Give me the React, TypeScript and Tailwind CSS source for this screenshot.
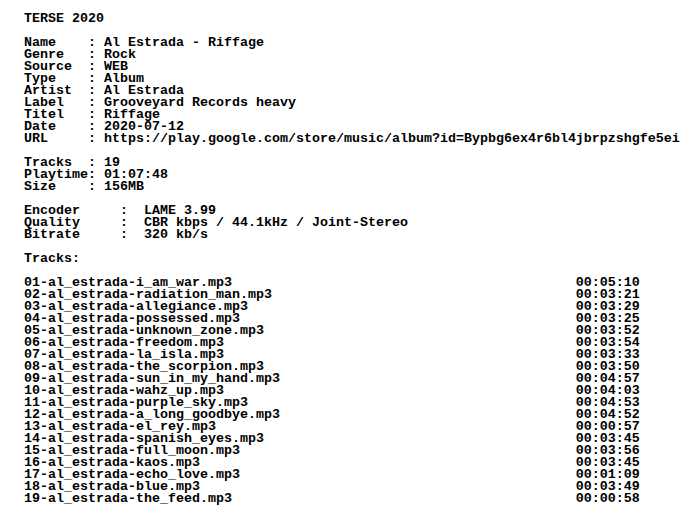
import React from "react";

const header = `TERSE 2020

Name    : Al Estrada - Riffage
Genre   : Rock
Source  : WEB
Type    : Album
Artist  : Al Estrada
Label   : Grooveyard Records heavy
Titel   : Riffage
Date    : 2020-07-12
URL     : https://play.google.com/store/music/album?id=Bypbg6ex4r6bl4jbrpzshgfe5ei

Tracks  : 19
Playtime: 01:07:48
Size    : 156MB

Encoder     :  LAME 3.99
Quality     :  CBR kbps / 44.1kHz / Joint-Stereo
Bitrate     :  320 kb/s

Tracks:
`;

const tracks: [string, string][] = [
  ["01-al_estrada-i_am_war.mp3", "00:05:10"],
  ["02-al_estrada-radiation_man.mp3", "00:03:21"],
  ["03-al_estrada-allegiance.mp3", "00:03:29"],
  ["04-al_estrada-possessed.mp3", "00:03:25"],
  ["05-al_estrada-unknown_zone.mp3", "00:03:52"],
  ["06-al_estrada-freedom.mp3", "00:03:54"],
  ["07-al_estrada-la_isla.mp3", "00:03:33"],
  ["08-al_estrada-the_scorpion.mp3", "00:03:50"],
  ["09-al_estrada-sun_in_my_hand.mp3", "00:04:57"],
  ["10-al_estrada-wahz_up.mp3", "00:04:03"],
  ["11-al_estrada-purple_sky.mp3", "00:04:53"],
  ["12-al_estrada-a_long_goodbye.mp3", "00:04:52"],
  ["13-al_estrada-el_rey.mp3", "00:00:57"],
  ["14-al_estrada-spanish_eyes.mp3", "00:03:45"],
  ["15-al_estrada-full_moon.mp3", "00:03:56"],
  ["16-al_estrada-kaos.mp3", "00:03:45"],
  ["17-al_estrada-echo_love.mp3", "00:01:09"],
  ["18-al_estrada-blue.mp3", "00:03:49"],
  ["19-al_estrada-the_feed.mp3", "00:00:58"],
];

export default function App() {
  const text =
    header +
    "\n" +
    tracks.map(([n, d]) => n.padEnd(69, " ") + d).join("\n");
  return (
    <div className="w-[688px] h-[516px] bg-white overflow-hidden">
      <pre
        className="pl-6 pt-[13px] m-0 text-black font-bold text-[13.333px] leading-[12px] whitespace-pre"
        style={{ fontFamily: '"Liberation Mono", "DejaVu Sans Mono", monospace' }}
      >
        {text}
      </pre>
    </div>
  );
}
